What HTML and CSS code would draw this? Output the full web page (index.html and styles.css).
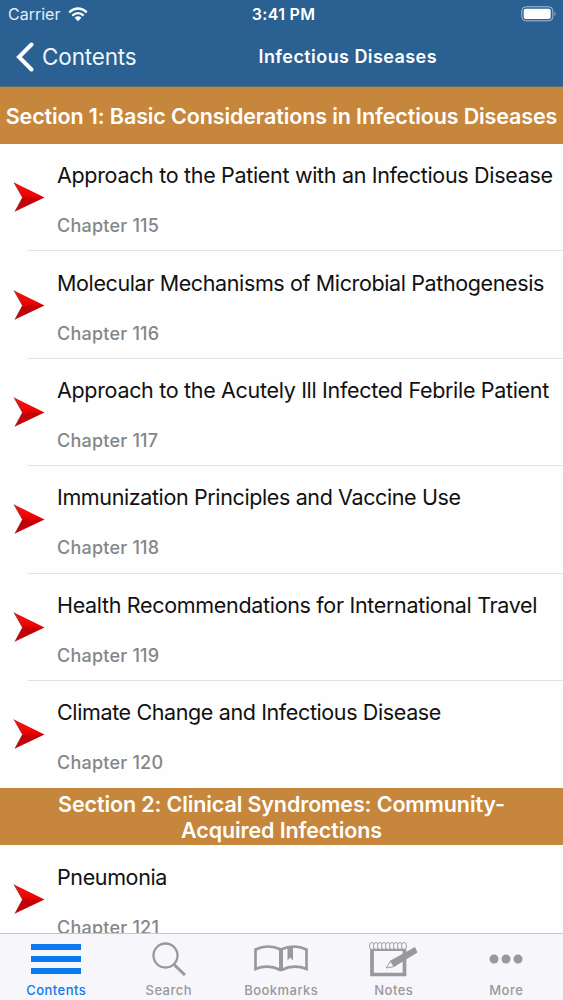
FILE: index.html
```html
<!DOCTYPE html>
<html lang="en">
<head>
<meta charset="utf-8">
<title>Infectious Diseases</title>
<link rel="stylesheet" href="styles.css">
</head>
<body>
<svg class="defs" width="0" height="0" aria-hidden="true">
  <defs>
    <linearGradient id="red" x1="0" y1="0" x2="0" y2="1"><stop offset="0" stop-color="#e51a1a"/><stop offset=".35" stop-color="#f50505"/><stop offset=".5" stop-color="#e50000"/><stop offset=".56" stop-color="#c40008"/><stop offset="1" stop-color="#bd0810"/></linearGradient>
    <symbol id="arrow" viewBox="0 0 32 30"><path d="M1 .5 31.500 15.500 2 29.500 9.500 15.500Z" fill="url(#red)"/><path d="M1 .5 9.500 15.500 2 29.500" fill="none" stroke="#8c2020" stroke-width=".7"/></symbol>
  </defs>
</svg>
<div class="app">
  <header class="header">
    <div class="status">
      <div class="carrier"><span>Carrier</span>
        <svg width="20" height="15" viewBox="0 0 20 15" fill="none" stroke="#fff" stroke-width="2.300"><path d="M1.200 5.300Q10-2.300 18.800 5.300M4.300 8.600Q10 3.700 15.700 8.600"/><path d="M6.600 10.700Q10 8 13.400 10.700L10 14.300Z" fill="#fff" stroke="none"/></svg>
      </div>
      <time class="time">3:41 PM</time>
      <svg class="battery" width="36" height="16" viewBox="0 0 36 16"><rect x=".8" y=".8" width="31" height="14" rx="4" fill="none" stroke="#a9c1d7" stroke-width="1"/><rect x="2.700" y="2.700" width="27" height="10.300" rx="2" fill="#fff"/><path d="M33.500 5.200q2 2.500 0 5z" fill="#a9c1d7"/></svg>
    </div>
    <nav class="nav">
      <a class="back"><svg width="18" height="30" viewBox="0 0 18 30"><path d="M15.500 2.500 3 15 15.500 27.500" fill="none" stroke="#fff" stroke-width="4" stroke-linecap="round" stroke-linejoin="miter"/></svg><span>Contents</span></a>
      <h1 class="title">Infectious Diseases</h1>
    </nav>
  </header>
  <main class="list">
    <h2 class="section">Section 1: Basic Considerations in Infectious Diseases</h2>
    <article class="row"><svg class="arrow"><use href="#arrow"/></svg><div class="text"><h3 class="name wide">Approach to the Patient with an Infectious Disease</h3><p class="chapter">Chapter 115</p></div></article>
    <article class="row"><svg class="arrow"><use href="#arrow"/></svg><div class="text"><h3 class="name">Molecular Mechanisms of Microbial Pathogenesis</h3><p class="chapter">Chapter 116</p></div></article>
    <article class="row"><svg class="arrow"><use href="#arrow"/></svg><div class="text"><h3 class="name wide">Approach to the Acutely Ill Infected Febrile Patient</h3><p class="chapter">Chapter 117</p></div></article>
    <article class="row"><svg class="arrow"><use href="#arrow"/></svg><div class="text"><h3 class="name">Immunization Principles and Vaccine Use</h3><p class="chapter">Chapter 118</p></div></article>
    <article class="row"><svg class="arrow"><use href="#arrow"/></svg><div class="text"><h3 class="name wide">Health Recommendations for International Travel</h3><p class="chapter">Chapter 119</p></div></article>
    <article class="row last"><svg class="arrow"><use href="#arrow"/></svg><div class="text"><h3 class="name">Climate Change and Infectious Disease</h3><p class="chapter">Chapter 120</p></div></article>
    <h2 class="section second">Section 2: Clinical Syndromes: Community-<br>Acquired Infections</h2>
    <article class="row"><svg class="arrow"><use href="#arrow"/></svg><div class="text"><h3 class="name">Pneumonia</h3><p class="chapter">Chapter 121</p></div></article>
  </main>
  <footer class="tabs">
    <a class="tab active"><svg width="50" height="34" viewBox="0 0 50 34" fill="currentColor"><path d="M0 2h50v6H0zM0 14h50v6H0zM0 26h50v6H0z"/></svg><span>Contents</span></a>
    <a class="tab"><svg width="34" height="34" viewBox="0 0 34 34" fill="none" stroke="currentColor"><circle cx="13.500" cy="13.500" r="12" stroke-width="2.300"/><path d="M22 22.500 33 33" stroke-width="3"/></svg><span>Search</span></a>
    <a class="tab"><svg width="54" height="34" viewBox="0 0 54 34"><path d="M1.500 7.500Q14 1.500 27 7.500Q40 1.500 52.500 7.500V27Q40 22 27.500 28H26.500Q14 22 1.500 27Z" fill="none" stroke="currentColor" stroke-width="2.700"/><path d="M27 7v21" stroke="currentColor" stroke-width="4"/><path d="M33.500 5h5.500v13.500l-2.700-3-2.800 3z" fill="currentColor"/></svg><span>Bookmarks</span></a>
    <a class="tab"><svg width="50" height="36" viewBox="0 0 50 36"><path d="M3 7v25.500h32.500V7" fill="none" stroke="currentColor" stroke-width="3.700"/><path d="M1.500 6h35.500v3H1.500z" fill="currentColor"/><g fill="#f7f6fa" stroke="currentColor" stroke-width=".9"><ellipse cx="3" cy="4" rx="2.500" ry="3.500"/><ellipse cx="7" cy="4" rx="2.500" ry="3.500"/><ellipse cx="11" cy="4" rx="2.500" ry="3.500"/><ellipse cx="15" cy="4" rx="2.500" ry="3.500"/><ellipse cx="19" cy="4" rx="2.500" ry="3.500"/><ellipse cx="23" cy="4" rx="2.500" ry="3.500"/><ellipse cx="27" cy="4" rx="2.500" ry="3.500"/><ellipse cx="31" cy="4" rx="2.500" ry="3.500"/><ellipse cx="35" cy="4" rx="2.500" ry="3.500"/></g><path d="M46 5 48.500 10.500 25 25 17 26 21.500 18.500Z" fill="currentColor"/><path d="M17 26 21.500 19.500 25 24.500Z" fill="#f7f6fa" stroke="currentColor" stroke-width=".8"/></svg><span>Notes</span></a>
    <a class="tab"><svg width="34" height="34" viewBox="0 0 34 34" fill="currentColor"><circle cx="5" cy="17" r="4.500"/><circle cx="17" cy="17" r="4.500"/><circle cx="29" cy="17" r="4.500"/></svg><span>More</span></a>
  </footer>
</div>
</body>
</html>
```
FILE: styles.css
```css
* { box-sizing: border-box; }
body { margin: 0; font-family: Inter, "Liberation Sans", sans-serif; }
h1, h2, h3, p { margin: 0; }
svg { display: block; flex: none; }
.defs { position: absolute; }
.app { display: flex; flex-direction: column; width: 563px; height: 1000px; overflow: hidden; background: #fefefe; }
.header { flex: none; height: 87px; background: #2a6092; color: #fff; border-bottom: 1px solid #596b78; }
.status { display: grid; grid-template-columns: 1fr auto 1fr; align-items: center; height: 28px; padding: 0 6px 0 8px; font-size: 16px; }
.carrier { display: flex; align-items: center; gap: 8px; color: #e4edf5; }
.time { font-weight: 600; font-size: 16px; letter-spacing: 0.3px; padding-left: 2px; }
.battery { justify-self: end; }
.nav { display: grid; grid-template-columns: 242.500px 1fr; align-items: center; height: 57px; padding-left: 16px; }
.back { display: flex; align-items: center; gap: 8px; font-size: 22.500px; letter-spacing: -0.15px; color: #eef5fb; }
.title { font-size: 18px; font-weight: 600; letter-spacing: 0.430px; white-space: nowrap; }
.list { flex: 1; min-height: 0; overflow: hidden; }
.section { display: flex; align-items: center; justify-content: center; height: 57px; background: #c6863c; color: #fff; font-size: 21.500px; font-weight: 600; letter-spacing: -0.120px; line-height: 26px; text-align: center; white-space: nowrap; }
.second { display: block; padding-top: 3px; }
.row { display: flex; align-items: center; height: 107.400px; padding-left: 13px; background: linear-gradient(#e2e2e4, #e2e2e4) 28px 100% / 100% 1px no-repeat; }
.last { background: none; }
.arrow { width: 32px; height: 30px; margin-bottom: 1px; }
.text { display: flex; flex-direction: column; justify-content: space-between; height: 76px; margin: 3px 0 0 12px; }
.name { font-size: 21.500px; font-weight: 400; letter-spacing: -0.380px; line-height: 28px; color: #111; white-space: nowrap; }
.wide { letter-spacing: -0.320px; }
.chapter { font-size: 18px; font-weight: 500; letter-spacing: 0.220px; line-height: 22px; color: #868688; }
.tabs { flex: none; display: grid; grid-template-columns: repeat(5, 112.500px); height: 67px; background: #f7f6fa; border-top: 1px solid #c9c8cc; }
.tab { display: flex; flex-direction: column; align-items: center; justify-content: space-between; padding: 8px 0 2px; color: #99989b; font-size: 13px; font-weight: 500; letter-spacing: 0.450px; line-height: 15px; }
.active { color: #0b79ee; }
```
